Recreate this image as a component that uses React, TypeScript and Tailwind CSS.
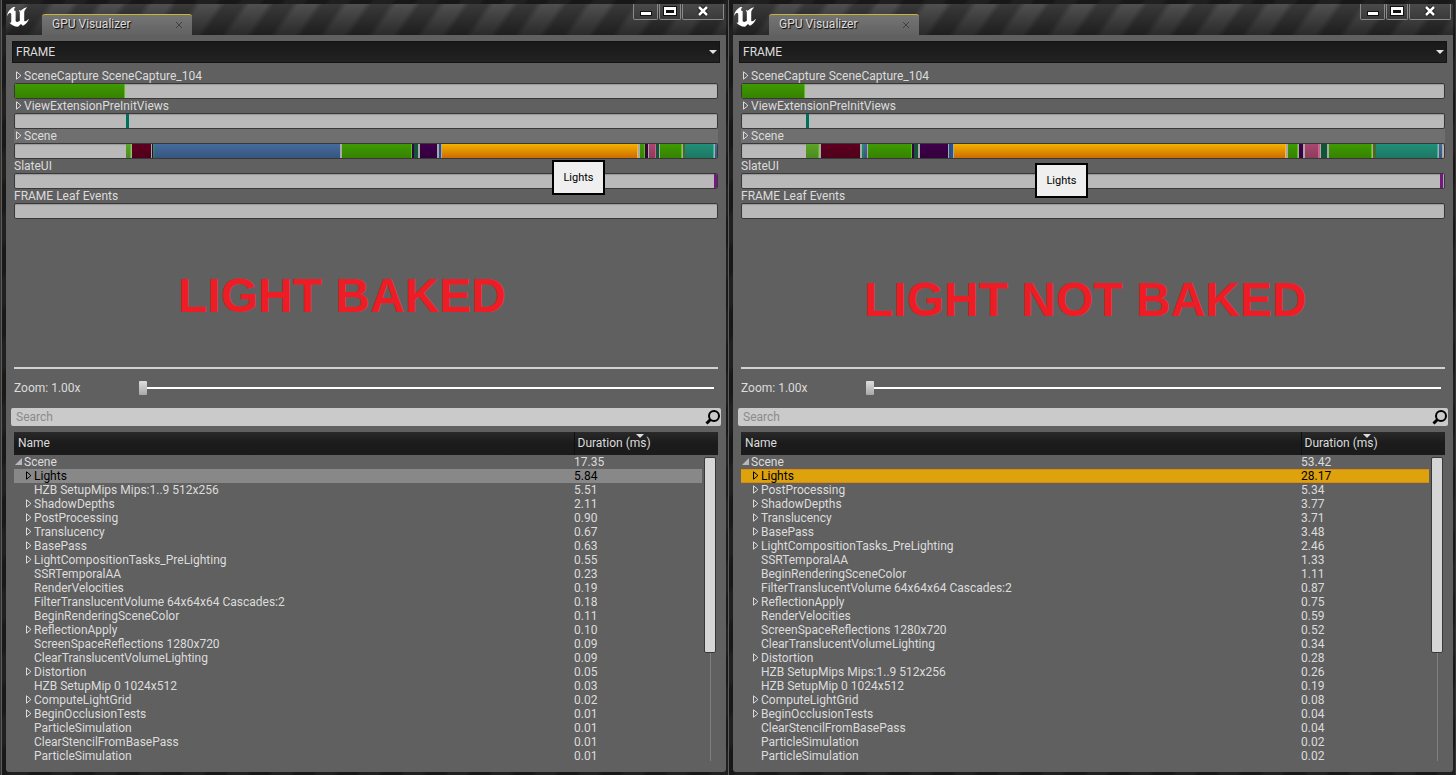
import { clsx } from "clsx";

type Row = [name: string, duration: string, expandable?: boolean];
type Segment = [color: keyof typeof segmentColors, width: number];
type Event = { name: string; expandable?: boolean; hovered?: boolean; segments: Segment[] };

// Segment widths are given in units of the full frame.
const FRAME_UNITS = 702;

const segmentColors = {
  none: "",
  gap: "bg-[#a9a9a9]",
  green: "bg-linear-to-b from-[#3f9a00] to-[#358200]",
  lime: "bg-[#55c410]",
  leaf: "bg-linear-to-b from-[#5ba526] to-[#4c8a20]",
  teal: "bg-linear-to-b from-[#228f77] to-[#1c7763]",
  mint: "bg-[#37b497]",
  sea: "bg-[#00705a]",
  maroon: "bg-linear-to-b from-[#5e0020] to-[#4e001a]",
  blue: "bg-linear-to-b from-[#456a9c] to-[#365680]",
  navy: "bg-[#28528a]",
  forest: "bg-[#125438]",
  purple: "bg-linear-to-b from-[#3e004a] to-[#32003c]",
  violet: "bg-[#74177f]",
  pink: "bg-linear-to-b from-[#a8486e] to-[#8c3c5c]",
  rose: "bg-[#d0608c]",
  olive: "bg-[#4c6a1c]",
  orange: "bg-linear-to-b from-[#f4b200] via-[#e09000] to-[#cc6c00]",
  amber: "bg-[#ffb030]"
};

const bakedEvents: Event[] = [
  {
    name: "SceneCapture SceneCapture_104",
    expandable: true,
    segments: [["green", 109], ["lime", 1]]
  },
  { name: "ViewExtensionPreInitViews", expandable: true, segments: [["none", 111], ["sea", 3]] },
  {
    name: "Scene",
    expandable: true,
    hovered: true,
    segments: [
      ["none", 111], ["leaf", 4], ["lime", 1], ["gap", 1], ["maroon", 19], ["gap", 1],
      ["maroon", 1], ["teal", 2], ["blue", 185], ["gap", 2], ["green", 69], ["lime", 1],
      ["purple", 2], ["forest", 4], ["gap", 2], ["purple", 17], ["gap", 2], ["navy", 2],
      ["gap", 1], ["orange", 195], ["amber", 1], ["gap", 2], ["green", 4], ["lime", 1],
      ["purple", 3], ["gap", 1], ["pink", 6], ["rose", 1], ["forest", 3], ["gap", 1],
      ["green", 21], ["lime", 1], ["gap", 1], ["olive", 2], ["teal", 28], ["mint", 1],
      ["gap", 1], ["blue", 2]
    ]
  },
  { name: "SlateUI", segments: [["none", 699], ["violet", 3]] },
  { name: "FRAME Leaf Events", segments: [] }
];

const unbakedEvents: Event[] = [
  {
    name: "SceneCapture SceneCapture_104",
    expandable: true,
    segments: [["green", 62], ["lime", 1]]
  },
  { name: "ViewExtensionPreInitViews", expandable: true, segments: [["none", 64], ["sea", 3]] },
  {
    name: "Scene",
    expandable: true,
    hovered: true,
    segments: [
      ["none", 64], ["leaf", 12], ["lime", 1], ["gap", 2], ["maroon", 39], ["gap", 2],
      ["teal", 2], ["blue", 3], ["gap", 1], ["green", 43], ["lime", 1], ["purple", 2],
      ["forest", 4], ["gap", 2], ["purple", 28], ["gap", 1], ["navy", 4], ["gap", 1],
      ["orange", 331], ["amber", 1], ["gap", 2], ["green", 9], ["lime", 1], ["gap", 1],
      ["purple", 4], ["gap", 2], ["pink", 13], ["rose", 2], ["gap", 1], ["forest", 6],
      ["gap", 2], ["green", 42], ["lime", 1], ["gap", 1], ["olive", 3], ["teal", 61],
      ["mint", 1], ["gap", 1], ["blue", 3], ["gap", 1]
    ]
  },
  { name: "SlateUI", segments: [["none", 698], ["violet", 3], ["gap", 1]] },
  { name: "FRAME Leaf Events", segments: [] }
];

const bakedRows: Row[] = [
  ["Scene", "17.35", true],
  ["Lights", "5.84", true],
  ["HZB SetupMips Mips:1..9 512x256", "5.51"],
  ["ShadowDepths", "2.11", true],
  ["PostProcessing", "0.90", true],
  ["Translucency", "0.67", true],
  ["BasePass", "0.63", true],
  ["LightCompositionTasks_PreLighting", "0.55", true],
  ["SSRTemporalAA", "0.23"],
  ["RenderVelocities", "0.19"],
  ["FilterTranslucentVolume 64x64x64 Cascades:2", "0.18"],
  ["BeginRenderingSceneColor", "0.11"],
  ["ReflectionApply", "0.10", true],
  ["ScreenSpaceReflections 1280x720", "0.09"],
  ["ClearTranslucentVolumeLighting", "0.09"],
  ["Distortion", "0.05", true],
  ["HZB SetupMip 0 1024x512", "0.03"],
  ["ComputeLightGrid", "0.02", true],
  ["BeginOcclusionTests", "0.01", true],
  ["ParticleSimulation", "0.01"],
  ["ClearStencilFromBasePass", "0.01"],
  ["ParticleSimulation", "0.01"]
];

const unbakedRows: Row[] = [
  ["Scene", "53.42", true],
  ["Lights", "28.17", true],
  ["PostProcessing", "5.34", true],
  ["ShadowDepths", "3.77", true],
  ["Translucency", "3.71", true],
  ["BasePass", "3.48", true],
  ["LightCompositionTasks_PreLighting", "2.46", true],
  ["SSRTemporalAA", "1.33"],
  ["BeginRenderingSceneColor", "1.11"],
  ["FilterTranslucentVolume 64x64x64 Cascades:2", "0.87"],
  ["ReflectionApply", "0.75", true],
  ["RenderVelocities", "0.59"],
  ["ScreenSpaceReflections 1280x720", "0.52"],
  ["ClearTranslucentVolumeLighting", "0.34"],
  ["Distortion", "0.28", true],
  ["HZB SetupMips Mips:1..9 512x256", "0.26"],
  ["HZB SetupMip 0 1024x512", "0.19"],
  ["ComputeLightGrid", "0.08", true],
  ["BeginOcclusionTests", "0.04", true],
  ["ClearStencilFromBasePass", "0.04"],
  ["ParticleSimulation", "0.02"],
  ["ParticleSimulation", "0.02"]
];

function UnrealLogo() {
  return (
    <svg
      viewBox="4.6 5.3 14.6 14.2"
      preserveAspectRatio="none"
      className="mt-[3px] ml-px h-5 w-[22px] shrink-0 fill-white"
      aria-hidden="true"
    >
      <path d="M19.13 13.729c-.206.997-1.126 3.557-4.06 4.942l-1.179-1.325-1.988 2a7.338 7.338 0 01-5.804-2.978 2.859 2.859 0 00.65.123c.326.006.678-.114.678-.66v-5.394a.89.89 0 00-1.116-.89c-.92.212-1.656 2.509-1.656 2.509a7.304 7.304 0 012.528-5.597 7.408 7.408 0 013.73-1.721c-1.006.573-1.57 1.507-1.57 2.29 0 1.262.76 1.109.984.923v7.28a1.157 1.157 0 00.148.256 1.075 1.075 0 00.88.445c.76 0 1.747-.868 1.747-.868V9.172c0-.6-.452-1.324-.905-1.572 0 0 .838-.149 1.484.346a5.537 5.537 0 01.387-.425c1.508-1.48 2.929-1.902 4.112-2.112 0 0-2.151 1.69-2.151 3.96 0 1.687.043 5.801.043 5.801.799.771 1.986-.342 3.059-1.441z" />
    </svg>
  );
}

function Expander({ open = false }: { open?: boolean }) {
  return (
    <svg viewBox="0 0 10 10" className="h-[10px] w-[10px] shrink-0" aria-hidden="true">
      {open ? (
        <path d="M8 1V8H1z" fill="#b8b8b8" />
      ) : (
        <path d="M2.500 .8V8.200L6.500 5V4z" fill="none" stroke="currentColor" />
      )}
    </svg>
  );
}

function WindowButtons() {
  const button =
    "flex h-4 items-center justify-center rounded-b-[2px] border border-t-0 border-[#8a8a8a] bg-linear-to-b from-[#4a4a4a] to-[#3a3a3a] pb-px";
  return (
    <div className="mr-[2px] flex h-4 gap-px">
      <button type="button" aria-label="Minimize" className={clsx(button, "w-[25px]")}>
        <svg viewBox="0 0 14 12" className="h-3 w-[14px]">
          <rect x="1.500" y="6.500" width="11" height="4" fill="#fff" stroke="#111" />
        </svg>
      </button>
      <button type="button" aria-label="Maximize" className={clsx(button, "w-[22px]")}>
        <svg viewBox="0 0 14 12" className="h-3 w-[14px]">
          <path d="M0 1h14v10H0z" fill="#111" />
          <path fillRule="evenodd" d="M1 2h12v8H1zM3 5v3h8V5z" fill="#fff" />
        </svg>
      </button>
      <button type="button" aria-label="Close" className={clsx(button, "w-[42px]")}>
        <svg viewBox="0 0 14 12" className="h-3 w-[14px]">
          <path d="M3 2l8 8M11 2l-8 8" stroke="#111" strokeWidth="4.500" />
          <path d="M3 2l8 8M11 2l-8 8" stroke="#fff" strokeWidth="2.500" />
        </svg>
      </button>
    </div>
  );
}

function TitleBar() {
  return (
    <header className="flex h-[31px] items-start bg-[repeating-linear-gradient(125deg,#00000000_0px,#00000000_14px,#00000048_20px,#00000048_34px,#00000000_40px),linear-gradient(to_bottom,#505050,#2a2a2a)]">
      <UnrealLogo />
      <div className="mt-[10px] ml-[13px] flex h-[21px] w-[150px] items-center justify-between rounded-t-[3px] border-t border-[#c8b430] bg-linear-to-b from-[#757575] to-[#626262] pr-[9px] pb-[2px] pl-[10px]">
        <h1 className="text-xs [text-shadow:1px_1px_1px_#000]">GPU Visualizer</h1>
        <button type="button" aria-label="Close tab" className="text-[#404040]">
          <svg viewBox="0 0 8 8" className="h-2 w-2" stroke="currentColor">
            <path d="M1 2l6 6M7 2L1 8" />
          </svg>
        </button>
      </div>
      <div className="grow" />
      <WindowButtons />
    </header>
  );
}

function EventBar({ event }: { event: Event }) {
  return (
    <div>
      <div className={clsx("flex h-[14px] items-center leading-[14px]", event.hovered && "bg-[#6f6f6f]")}>
        {event.expandable && <Expander />}
        <span>{event.name}</span>
      </div>
      <div className="flex h-4 overflow-hidden rounded-[2px] border border-[#383838] bg-[#b9b9b9] shadow-[inset_0_1px_1px_#9a9a9a]">
        {event.segments.map(([color, width], i) => (
          <div
            key={i}
            className={clsx("shrink-0", segmentColors[color])}
            style={{ width: `${(width / FRAME_UNITS) * 100}%` }}
          />
        ))}
      </div>
    </div>
  );
}

function SearchIcon() {
  return (
    <svg viewBox="0 0 16 16" className="h-4 w-4 shrink-0" fill="none" stroke="#000" aria-hidden="true">
      <circle cx="9" cy="7" r="5" strokeWidth="2" />
      <path d="M5.500 10.500L1.500 14.500" strokeWidth="3" />
    </svg>
  );
}

function EventTable({ rows, selectedClass }: { rows: Row[]; selectedClass: string }) {
  return (
    <table className="w-full table-fixed border-collapse">
      <colgroup>
        <col />
        <col className="w-32" />
        <col className="w-4" />
      </colgroup>
      <thead>
        <tr className="h-[23px] bg-linear-to-b from-[#292929] via-[#1b1b1b] to-[#1b1b1b] text-left">
          <th className="pb-[2px] pl-1 font-normal">Name</th>
          <th colSpan={2} className="relative border-l border-[#101010] pb-[2px] pl-[3px] font-normal">
            Duration (ms)
            <svg viewBox="0 0 8 4" className="absolute top-[2px] left-[61px] h-1 w-2" fill="#ddd">
              <path d="M0 0h8L4 4z" />
            </svg>
          </th>
        </tr>
      </thead>
      <tbody>
        {rows.map(([name, duration, expandable], i) => (
          <tr key={i} className="h-[14px] leading-[14px]">
            <td className={clsx("p-0", i === 1 && selectedClass)}>
              <div className={clsx("flex h-[14px] items-center", i > 0 && "pl-[10px]")}>
                {expandable ? <Expander open={i === 0} /> : <span className="w-[10px]" />}
                <span>{name}</span>
              </div>
            </td>
            <td className={clsx("p-0", i === 1 && selectedClass)}>{duration}</td>
            {i === 0 && (
              <td rowSpan={rows.length} className="relative p-0">
                <div className="absolute inset-y-[2px] left-[8px] w-px bg-[#808080]" />
                <div className="absolute top-[2px] left-[2px] h-[196px] w-3 rounded-[2px] border border-[#383838] bg-[#d6d6d6]" />
              </td>
            )}
          </tr>
        ))}
      </tbody>
    </table>
  );
}

function VisualizerWindow({
  id,
  events,
  rows,
  caption,
  captionClass,
  tooltipClass,
  selectedClass
}: {
  id: string;
  events: Event[];
  rows: Row[];
  caption: string;
  captionClass: string;
  tooltipClass: string;
  selectedClass: string;
}) {
  return (
    <section className="min-w-0 flex-1 border-l border-[#5c5c5c] bg-[repeating-linear-gradient(125deg,#181818_0px,#181818_14px,#202020_18px,#202020_32px,#181818_36px)] pt-1 pr-[2px] pb-[3px] pl-1">
      <TitleBar />
      <div className="rounded-b-[3px] bg-[#606060] px-[5px] pt-[6px] pb-[9px]">
        <div className="relative mx-px">
          <select
            aria-label="Root event"
            className="block h-[22px] w-full appearance-none border border-[#141414] bg-linear-to-b from-[#191919] to-[#222] pl-[3px] text-xs text-[#dcdcdc]"
          >
            <option>FRAME</option>
          </select>
          <svg
            viewBox="0 0 8 4"
            className="pointer-events-none absolute top-[9px] right-[3px] h-1 w-2"
            fill="#e4e4e4"
          >
            <path d="M0 0h8L4 4z" />
          </svg>
        </div>

        <div className="relative mx-[3px] mt-[6px]">
          {events.map((event) => (
            <EventBar key={event.name} event={event} />
          ))}
          <div
            role="tooltip"
            className={clsx(
              "absolute flex h-[35px] w-[53px] items-center justify-center border-2 border-black bg-[#efefef] pt-px text-[11px] text-black",
              tooltipClass
            )}
          >
            Lights
          </div>
        </div>

        <div className="mx-[3px] h-[150px] border-b-2 border-[#d2d2d2]">
          <p
            className={clsx(
              "font-['Liberation_Sans',sans-serif] text-5xl leading-[56px] font-bold whitespace-nowrap text-[#ee1c24]",
              captionClass
            )}
          >
            {caption}
          </p>
        </div>

        <div className="mx-[3px] mb-[2px] flex h-[37px] items-center pr-1">
          <label htmlFor={`${id}-zoom`} className="w-[125px] shrink-0">
            Zoom: 1.00x
          </label>
          <input
            id={`${id}-zoom`}
            type="range"
            min={1}
            max={20}
            defaultValue={1}
            className="h-[14px] min-w-0 flex-1 appearance-none bg-[linear-gradient(#fff,#fff)] bg-[length:100%_2px] bg-center bg-no-repeat [&::-webkit-slider-thumb]:h-[14px] [&::-webkit-slider-thumb]:w-2 [&::-webkit-slider-thumb]:appearance-none [&::-webkit-slider-thumb]:rounded-[1px] [&::-webkit-slider-thumb]:bg-linear-to-b [&::-webkit-slider-thumb]:from-[#dedede] [&::-webkit-slider-thumb]:to-[#a8a8a8]"
          />
        </div>

        <div className="mb-[6px] flex h-[18px] items-center rounded-[2px] bg-[#cacaca] pl-[5px]">
          <input
            type="text"
            placeholder="Search"
            aria-label="Search"
            className="h-[18px] min-w-0 grow text-xs text-black outline-none placeholder:text-[#8a8a8a]"
          />
          <SearchIcon />
        </div>

        <div className="mx-[3px]">
          <EventTable rows={rows} selectedClass={selectedClass} />
        </div>
      </div>
    </section>
  );
}

export default function App() {
  return (
    <main className="flex min-h-screen bg-[#3a322c] px-px font-[Roboto,sans-serif] text-xs text-[#dcdcdc]">
      <VisualizerWindow
        id="baked"
        events={bakedEvents}
        rows={bakedRows}
        caption="LIGHT BAKED"
        captionClass="pt-[49px] pl-[164px]"
        tooltipClass="top-[91px] left-[538px]"
        selectedClass="bg-[#888] text-black"
      />
      <VisualizerWindow
        id="unbaked"
        events={unbakedEvents}
        rows={unbakedRows}
        caption="LIGHT NOT BAKED"
        captionClass="pt-[53px] pl-[123px]"
        tooltipClass="top-[94px] left-[294px]"
        selectedClass="bg-[#dda20c] text-black shadow-[inset_0_1px_#e08a0c,inset_0_-1px_#e08a0c]"
      />
    </main>
  );
}
